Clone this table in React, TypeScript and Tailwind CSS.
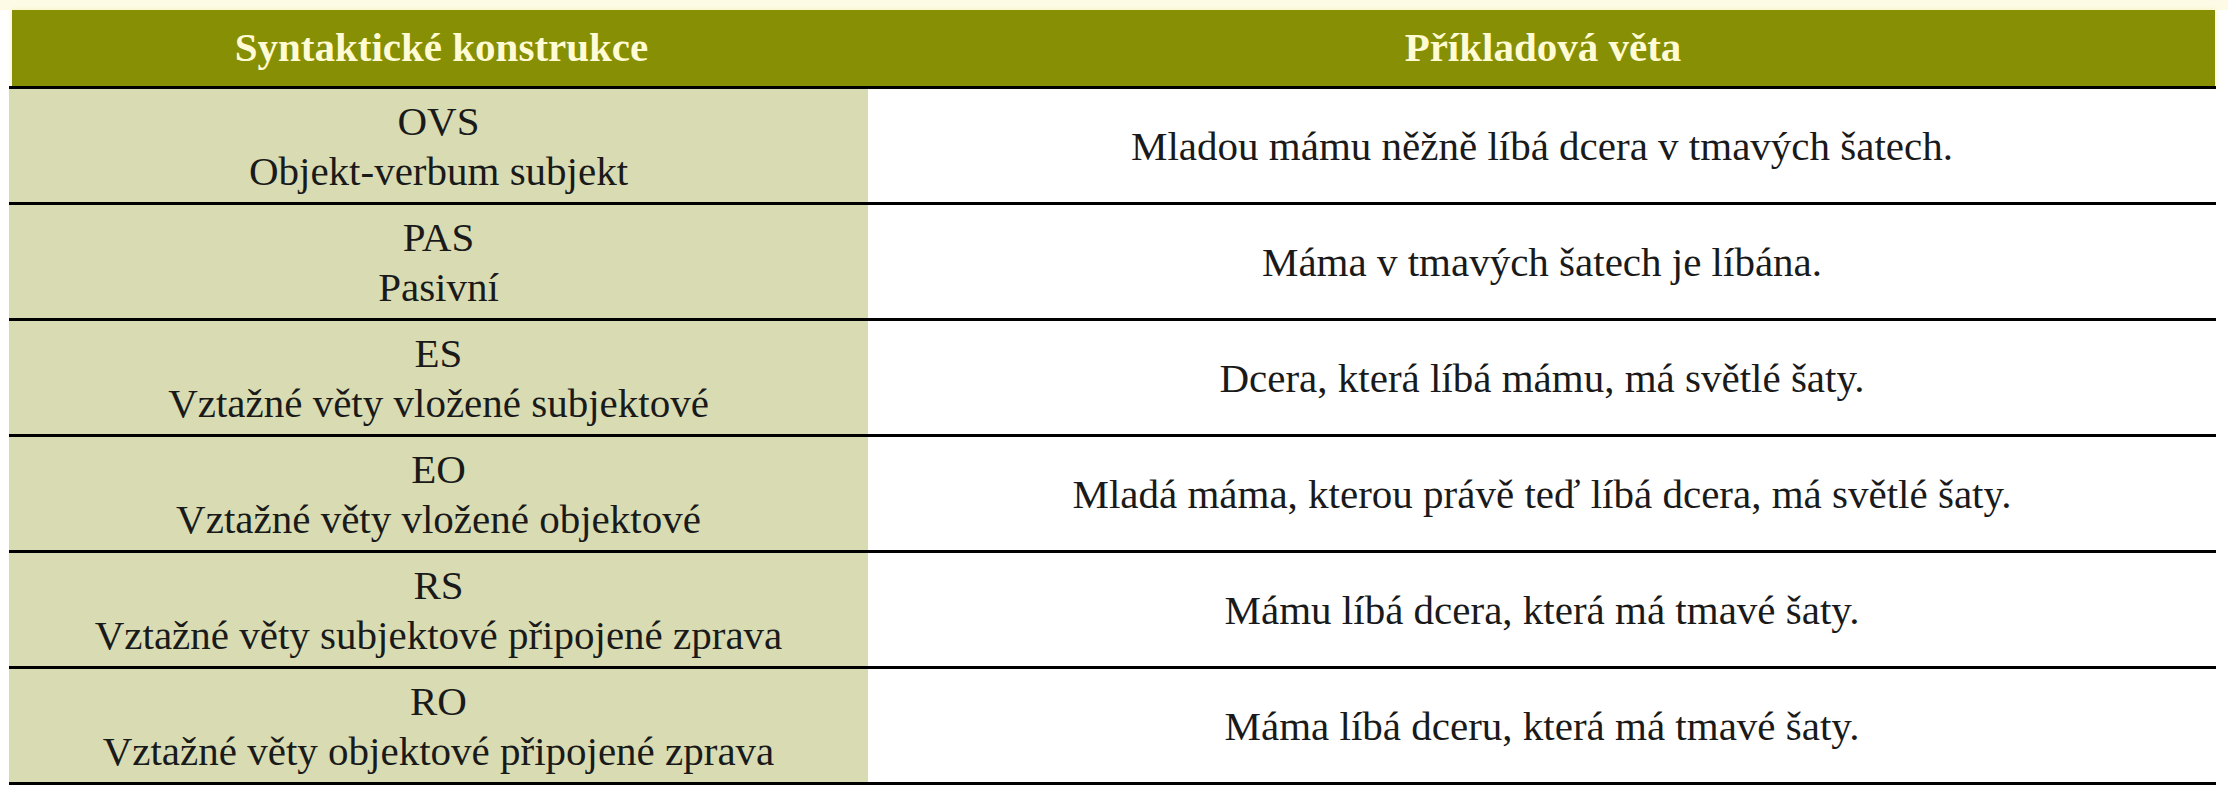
import React from 'react'

const rows = [
  { code: 'OVS', name: 'Objekt-verbum subjekt', example: 'Mladou mámu něžně líbá dcera v tmavých šatech.' },
  { code: 'PAS', name: 'Pasivní', example: 'Máma v tmavých šatech je líbána.' },
  { code: 'ES', name: 'Vztažné věty vložené subjektové', example: 'Dcera, která líbá mámu, má světlé šaty.' },
  { code: 'EO', name: 'Vztažné věty vložené objektové', example: 'Mladá máma, kterou právě teď líbá dcera, má světlé šaty.' },
  { code: 'RS', name: 'Vztažné věty subjektové připojené zprava', example: 'Mámu líbá dcera, která má tmavé šaty.' },
  { code: 'RO', name: 'Vztažné věty objektové připojené zprava', example: 'Máma líbá dceru, která má tmavé šaty.' },
]

export default function App() {
  return (
    <div className="w-[2228px] h-[800px] bg-white font-['Liberation_Serif',serif] text-[#1a1a1a]">
      <div className="h-[10px] bg-[#fdfbe6]" />
      <div className="ml-[9px] w-[2207px]">
        {/* hlavička */}
        <div className="grid grid-cols-[859px_1fr] h-[76px] bg-[#878f05] ml-[3px] mr-[1px] shadow-[0_0_5px_#f3efb5] text-[#fffbd4] font-bold text-[41px]">
          <div className="flex items-center justify-center">Syntaktické konstrukce</div>
          <div className="flex items-center justify-center">Příkladová věta</div>
        </div>
        <div className="h-[3px] bg-black" />

        {rows.map((r) => (
          <div key={r.code} className="border-b-[3px] border-black">
            <div className="grid grid-cols-[859px_1fr] h-[113px] text-[41px] leading-[50px]">
              <div className="bg-[#d9dcb2] flex flex-col items-center justify-center">
                <span>{r.code}</span>
                <span>{r.name}</span>
              </div>
              <div className="flex items-center justify-center">{r.example}</div>
            </div>
          </div>
        ))}
      </div>
    </div>
  )
}
